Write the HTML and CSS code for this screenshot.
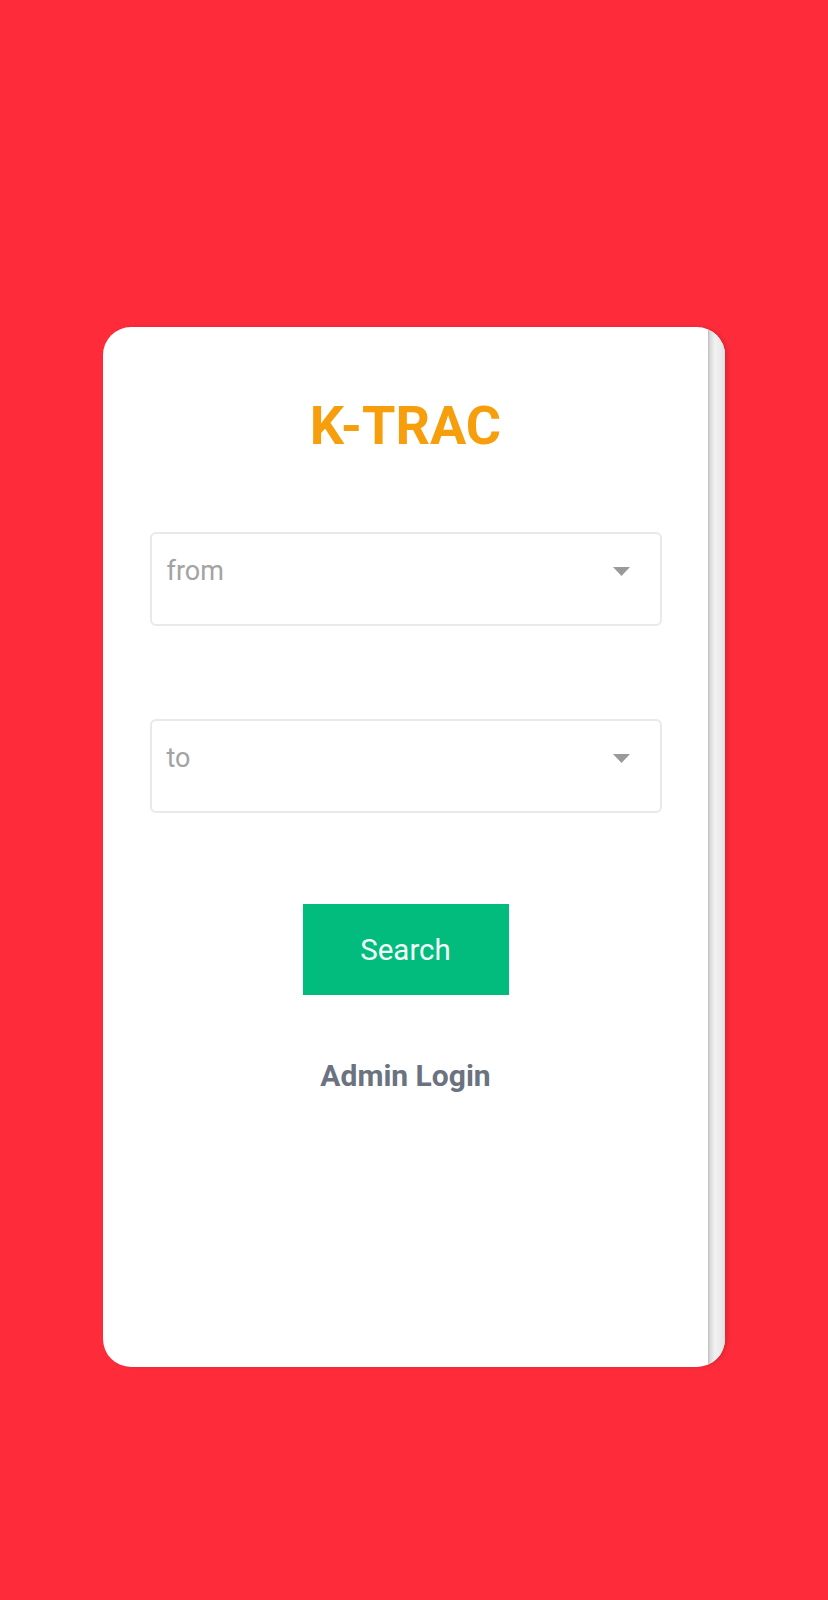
FILE: index.html
```html
<!DOCTYPE html>
<html lang="en">
<head>
<meta charset="utf-8">
<title>K-TRAC</title>
<link rel="stylesheet" href="styles.css">
</head>
<body>
<main class="page">
  <section class="card">
    <div class="card-body">
      <h1 class="brand">K-TRAC</h1>
      <div class="field">
        <span class="placeholder">from</span>
        <svg class="caret" width="17" height="9" viewBox="0 0 17 9"><path d="M0 0H17L8.5 9Z" fill="#9a9a9a"/></svg>
      </div>
      <div class="field field-to">
        <span class="placeholder">to</span>
        <svg class="caret" width="17" height="9" viewBox="0 0 17 9"><path d="M0 0H17L8.5 9Z" fill="#9a9a9a"/></svg>
      </div>
      <button class="search-btn" type="button">Search</button>
      <a class="admin-link" href="#">Admin Login</a>
    </div>
    <div class="scrollbar"></div>
  </section>
</main>
</body>
</html>
```

FILE: styles.css
```css
html, body {
  margin: 0;
  padding: 0;
}

body {
  background: #fe2c3b;
  font-family: Roboto, "Noto Sans", "Liberation Sans", sans-serif;
  height: 1600px;
  overflow: hidden;
}

.page {
  display: flex;
  justify-content: center;
  padding-top: 327px;
}

.card {
  width: 622px;
  height: 1040px;
  background: #ffffff;
  border-radius: 28px;
  overflow: hidden;
  display: flex;
  box-shadow: 3px 0 4px rgba(0, 0, 0, 0.12);
}

.card-body {
  flex: 1;
  display: flex;
  flex-direction: column;
  align-items: center;
  padding-top: 67px;
}

.brand {
  margin: 0;
  font-size: 54px;
  line-height: 63px;
  font-weight: 700;
  color: #f79e0c;
  letter-spacing: 0;
}

.field {
  box-sizing: border-box;
  width: 512px;
  height: 94px;
  margin-top: 75px;
  border: 2px solid #e9e9e9;
  border-radius: 6px;
  display: flex;
  align-items: center;
  justify-content: space-between;
  padding: 0 30px 16px 15px;
}

.field-to {
  margin-top: 93px;
}

.placeholder {
  font-size: 27px;
  line-height: 30px;
  color: #a3a3a3;
}

.caret {
  display: block;
}

.search-btn {
  margin-top: 91px;
  width: 206px;
  height: 91px;
  border: none;
  border-radius: 0;
  background: #02bc7d;
  color: #f4fff9;
  font-family: inherit;
  font-size: 29.5px;
  font-weight: 400;
  padding: 0;
}

.admin-link {
  margin-top: 63px;
  font-size: 30px;
  line-height: 36px;
  font-weight: 700;
  color: #6b7280;
  text-decoration: none;
}

.scrollbar {
  width: 17px;
  flex: none;
  background: linear-gradient(to right, #bdbdbd 0, #d9d9d9 2px, #f2f2f2 7px, #ececec 12px, #e0e0e0 17px);
}
```
